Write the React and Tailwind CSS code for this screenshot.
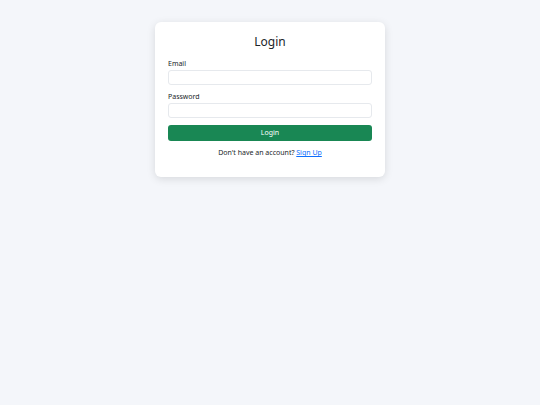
import React, { useState } from 'react';

const App = () => {
  const [email, setEmail] = useState('');
  const [password, setPassword] = useState('');

  return (
    <div className="min-h-screen bg-[#f4f6fa] pt-[22px] font-['Noto_Sans',sans-serif] text-[#212529]">
      <div className="mx-auto w-[230px] rounded-[6px] bg-white px-[13px] pt-[13px] pb-[19px] shadow-[0_2px_8px_rgba(0,0,0,0.12)]">
        <h3 className="mb-[10px] text-center text-[12px] leading-[14.4px] font-normal">Login</h3>

        <form onSubmit={(e) => e.preventDefault()}>
          <label className="block text-[7px] leading-[10px]">Email</label>
          <input
            type="email"
            value={email}
            onChange={(e) => setEmail(e.target.value)}
            className="mt-[1px] block h-[15px] w-full rounded-[3px] border border-[#e6e9ed] bg-white px-[6px] text-[7px] outline-none"
          />

          <label className="mt-[7px] block text-[7px] leading-[10px]">Password</label>
          <input
            type="password"
            value={password}
            onChange={(e) => setPassword(e.target.value)}
            className="mt-[1px] block h-[15px] w-full rounded-[3px] border border-[#e6e9ed] bg-white px-[6px] text-[7px] outline-none"
          />

          <button
            type="submit"
            className="mt-[7px] block h-[16px] w-full rounded-[3px] bg-[#198754] text-[7px] leading-[16px] text-white"
          >
            Login
          </button>
        </form>

        <p className="mt-[7px] text-center text-[7px] leading-[10px]">
          Don't have an account? <a href="#" className="text-[#0d6efd] underline">Sign Up</a>
        </p>
      </div>
    </div>
  );
};

export default App;
